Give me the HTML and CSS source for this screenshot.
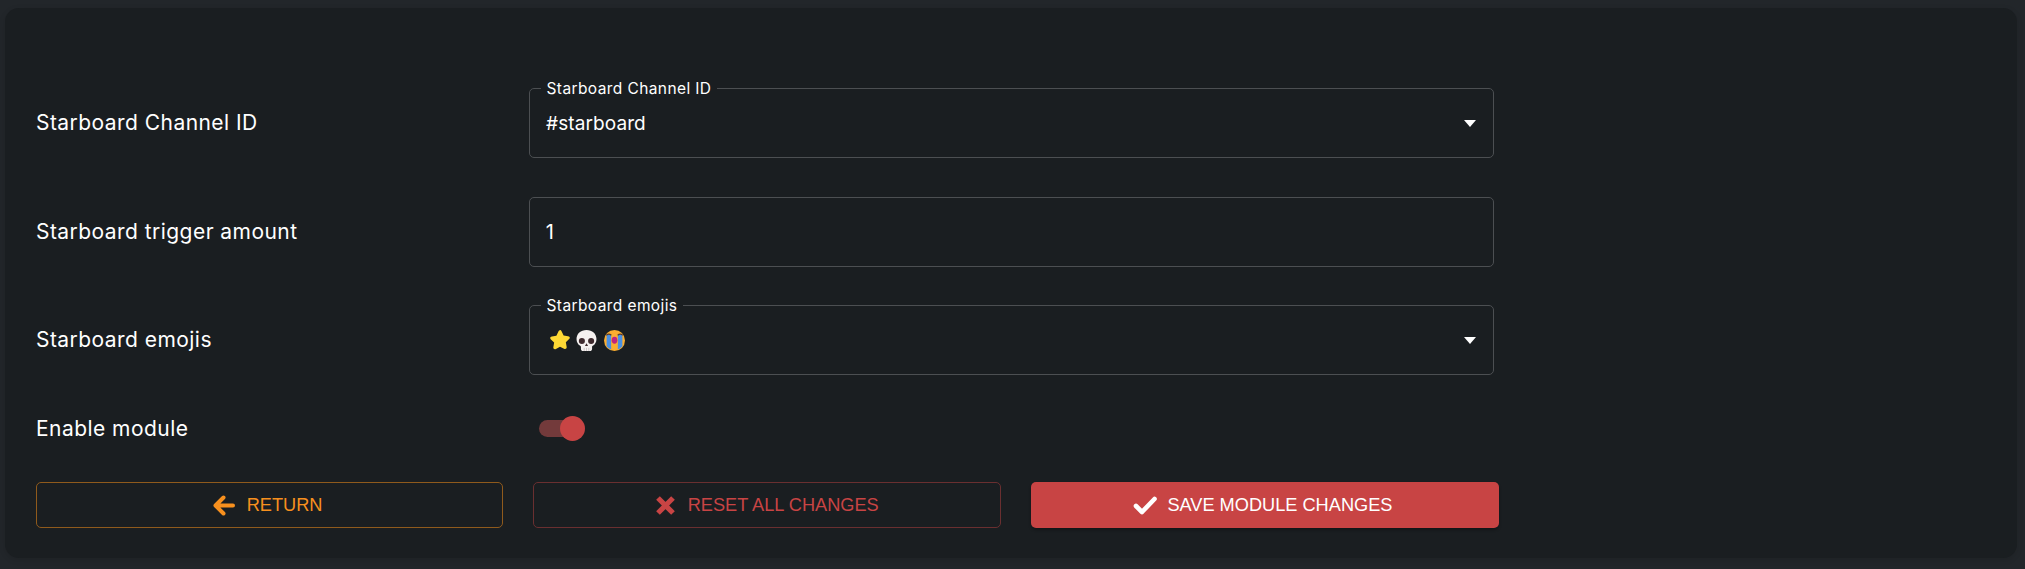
FILE: index.html
```html
<!DOCTYPE html>
<html lang="en">
<head>
<meta charset="utf-8">
<title>Starboard module</title>
<link rel="stylesheet" href="styles.css">
</head>
<body>
<main class="card">
  <div class="row">
    <div class="label">Starboard Channel ID</div>
    <div class="field">
      <span class="value">#starboard</span>
      <span class="arrow"></span>
      <fieldset class="outline"><legend class="legend">Starboard Channel ID</legend></fieldset>
    </div>
  </div>
  <div class="row">
    <div class="label">Starboard trigger amount</div>
    <div class="field boxed"><span class="value value-large">1</span></div>
  </div>
  <div class="row">
    <div class="label">Starboard emojis</div>
    <div class="field">
      <span class="emojis">
        <svg class="emoji" viewBox="1.200 .8 17.600 17.800"><path d="M10 .8c.7 0 1.100.5 1.500 1.300l1.700 3.600 4 .6c1.600.2 2 1.600.9 2.600l-2.900 2.800.7 4c.3 1.600-1 2.400-2.300 1.700L10 15.800l-3.600 1.900c-1.300.7-2.600-.1-2.300-1.700l.7-4-2.900-2.800c-1.100-1-.7-2.400.9-2.600l4-.6 1.700-3.600c.4-.8.8-1.300 1.500-1.300z" fill="#fdd835"/></svg>
        <svg class="emoji emoji-skull" viewBox="0 0 20 20"><path d="M10 0C4.500 0 .5 3.600.5 8.600c0 3 1.400 5.200 3.500 6.500.6.400.7.800.7 1.500V18c0 1.100.9 2 2 2h6.600c1.100 0 2-.9 2-2v-1.400c0-.7.100-1.100.7-1.500 2.100-1.300 3.500-3.500 3.500-6.500C19.500 3.600 15.500 0 10 0z" fill="#f5f1f0"/><circle cx="5.600" cy="10.500" r="2.900" fill="#3e2a2e"/><circle cx="14.400" cy="10.500" r="2.900" fill="#3e2a2e"/><path d="M10 12.500l1.500 2.700h-3z" fill="#3e2a2e"/><path d="M7.800 17v3M10 17v3M12.200 17v3" stroke="#b9b1b0" stroke-width=".6"/></svg>
        <svg class="emoji emoji-cry" viewBox="0 0 20 20"><circle cx="10" cy="10" r="10" fill="#fbae30"/><path d="M2.500 4.500h4.300v14a10 10 0 0 1-4.300-3zM13.200 4.500h4.300v11a10 10 0 0 1-4.300 3z" fill="#4a90e2"/><path d="M2.200 5q2.500-2.200 4.800 0M13 5q2.500-2.200 4.800 0" stroke="#5a3a2a" stroke-width="1.100" fill="none"/><ellipse cx="10" cy="9.700" rx="2.700" ry="3.300" fill="#c2247e"/></svg>
      </span>
      <span class="arrow"></span>
      <fieldset class="outline"><legend class="legend">Starboard emojis</legend></fieldset>
    </div>
  </div>
  <div class="row">
    <div class="label">Enable module</div>
    <div class="toggle"><span class="track"></span><span class="thumb"></span></div>
  </div>
  <div class="actions">
    <button class="btn btn-return">
      <svg class="icon icon-arrow" viewBox="0 0 22 21"><path d="M10.500 2.500L2.500 10.500L10.500 18.500M3 10.500H20" fill="none" stroke="currentColor" stroke-width="4" stroke-linecap="round" stroke-linejoin="round"/></svg>
      <span>RETURN</span>
    </button>
    <button class="btn btn-reset">
      <svg class="icon icon-x" viewBox="0 0 19 19"><path d="M2 2L17 17M17 2L2 17" fill="none" stroke="currentColor" stroke-width="5.200"/></svg>
      <span>RESET ALL CHANGES</span>
    </button>
    <button class="btn btn-save">
      <svg class="icon icon-check" viewBox="0 0 24 19"><path d="M3 10L9 16L21.500 3" fill="none" stroke="currentColor" stroke-width="4.600" stroke-linecap="round" stroke-linejoin="round"/></svg>
      <span>SAVE MODULE CHANGES</span>
    </button>
  </div>
</main>
</body>
</html>
```

FILE: styles.css
```css
* { box-sizing: border-box; }
html, body { margin: 0; height: 100%; }
body {
  background: #22262a;
  padding: 8px 8px 11px 5px;
  font-family: "Inter", "Open Sans", sans-serif;
  color: #fff;
  overflow: hidden;
}
.card {
  height: 550px;
  background: #1a1e21;
  border-radius: 14px;
  padding: 80px 0 0 31px;
  display: flex;
  flex-direction: column;
  gap: 38.500px;
  box-shadow: 0 2px 6px rgba(0, 0, 0, .12);
}
.row {
  display: grid;
  grid-template-columns: 493px 965px;
  align-items: center;
}
.label {
  font-size: 21px;
  letter-spacing: .45px;
  line-height: 30px;
  color: #fff;
}
.field {
  position: relative;
  height: 70px;
  padding: 0 17px;
  display: flex;
  align-items: center;
  justify-content: space-between;
}
.field.boxed {
  border: 1.250px solid #4c4f52;
  border-radius: 5px;
  padding: 0 15.750px;
}
.outline {
  position: absolute;
  top: -8.500px;
  right: 0;
  bottom: 0;
  left: 0;
  margin: 0;
  min-width: 0;
  padding: 0 10.500px;
  border: 1.250px solid #4c4f52;
  border-radius: 5px;
  pointer-events: none;
}
.legend {
  padding: 0 6px;
  font-size: 15.500px;
  letter-spacing: .4px;
  line-height: 17px;
  color: #fff;
}
.value { font-size: 19px; letter-spacing: .1px; line-height: 30px; position: relative; top: .5px; }
.value-large { font-size: 20px; }
.arrow {
  width: 0;
  height: 0;
  border-left: 6.500px solid transparent;
  border-right: 6.500px solid transparent;
  border-top: 7px solid #fff;
  margin-right: 1.500px;
}
.emojis { display: flex; gap: 6.500px; padding-left: 3.500px; }
.emoji { width: 20px; height: 20px; display: block; }
.emoji-skull { width: 21px; height: 21px; }
.emoji-cry { width: 21px; height: 21px; }
.toggle { position: relative; width: 46px; height: 25px; margin-left: 10px; }
.track {
  position: absolute;
  left: 0;
  top: 4px;
  width: 44px;
  height: 17px;
  border-radius: 9px;
  background: #733a3b;
}
.thumb {
  position: absolute;
  left: 21px;
  top: 0;
  width: 25px;
  height: 25px;
  border-radius: 50%;
  background: #c84444;
}
.actions {
  display: grid;
  grid-template-columns: 467.200px 467.800px 468px;
  column-gap: 30.100px;
}
.btn {
  height: 46px;
  border-radius: 5px;
  display: flex;
  align-items: center;
  justify-content: center;
  font-family: "Liberation Sans", Arial, sans-serif;
  font-size: 18.200px;
  background: transparent;
  padding: 0;
}
.btn-return { color: #f7901e; border: 1.250px solid #8f5a1c; gap: 12px; padding-right: 4px; }
.btn-reset { color: #c84444; border: 1.250px solid #6a2f30; gap: 13px; }
.btn-save {
  color: #fff;
  background: #c84444;
  border: 0;
  gap: 10.500px;
  padding-right: 5px;
  box-shadow: 0 2px 3px rgba(0, 0, 0, .3);
}
.icon { display: block; }
.icon-arrow { width: 22px; height: 21px; }
.icon-x { width: 19px; height: 19px; }
.icon-check { width: 24px; height: 19px; }
```
